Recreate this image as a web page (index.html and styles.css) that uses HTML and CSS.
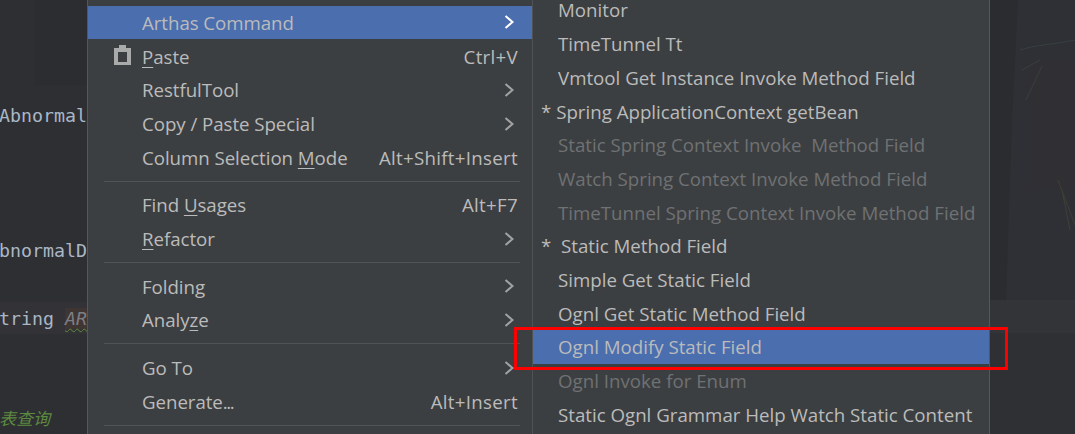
FILE: index.html
```html
<!DOCTYPE html>
<html lang="en">
<head>
  <meta charset="UTF-8">
  <meta name="viewport" content="width=device-width, initial-scale=1.0">
  <title>Arthas Command menu</title>
  <link rel="stylesheet" href="styles.css">
</head>
<body>
  <div class="screen">
    <div class="editor">
      <div class="code code-first"><span>Abnormal</span></div>
      <div class="code code-second"><span>bnormalD</span></div>
      <div class="code code-third"><span>tring <i class="const">AR</i></span></div>
      <div class="code code-comment"><span>表查询</span></div>
    </div>

    <div class="menu">
      <div class="row active"><span class="label">Arthas Command</span><svg class="arrow" viewBox="0 0 10 16"><path d="M1.5 2 L8.5 8 L1.5 14"/></svg></div>
      <div class="row">
        <svg class="icon" viewBox="0 0 17 20"><path fill-rule="evenodd" d="M0 3h5V0h7v3h5v17H0zM4 7v10h9V7z"/></svg>
        <span class="label"><u>P</u>aste</span><span class="keys">Ctrl+V</span>
      </div>
      <div class="row"><span class="label">RestfulTool</span><svg class="arrow" viewBox="0 0 10 16"><path d="M1.5 2 L8.5 8 L1.5 14"/></svg></div>
      <div class="row"><span class="label">Copy / Paste Special</span><svg class="arrow" viewBox="0 0 10 16"><path d="M1.5 2 L8.5 8 L1.5 14"/></svg></div>
      <div class="row"><span class="label">Column Selection <u>M</u>ode</span><span class="keys">Alt+Shift+Insert</span></div>
      <div class="sep"></div>
      <div class="row"><span class="label">Find <u>U</u>sages</span><span class="keys">Alt+F7</span></div>
      <div class="row"><span class="label"><u>R</u>efactor</span><svg class="arrow" viewBox="0 0 10 16"><path d="M1.5 2 L8.5 8 L1.5 14"/></svg></div>
      <div class="sep"></div>
      <div class="row"><span class="label">Folding</span><svg class="arrow" viewBox="0 0 10 16"><path d="M1.5 2 L8.5 8 L1.5 14"/></svg></div>
      <div class="row"><span class="label">Analy<u>z</u>e</span><svg class="arrow" viewBox="0 0 10 16"><path d="M1.5 2 L8.5 8 L1.5 14"/></svg></div>
      <div class="sep"></div>
      <div class="row"><span class="label">Go To</span><svg class="arrow" viewBox="0 0 10 16"><path d="M1.5 2 L8.5 8 L1.5 14"/></svg></div>
      <div class="row"><span class="label">Generate<span class="dots">...</span></span><span class="keys">Alt+Insert</span></div>
      <div class="sep"></div>
    </div>

    <div class="submenu">
      <div class="sub-row">Monitor</div>
      <div class="sub-row">TimeTunnel Tt</div>
      <div class="sub-row">Vmtool Get Instance Invoke Method Field</div>
      <div class="sub-row star">* Spring ApplicationContext getBean</div>
      <div class="sub-row off">Static Spring Context Invoke&nbsp; Method Field</div>
      <div class="sub-row off">Watch Spring Context Invoke Method Field</div>
      <div class="sub-row off">TimeTunnel Spring Context Invoke Method Field</div>
      <div class="sub-row star">*&nbsp; Static Method Field</div>
      <div class="sub-row">Simple Get Static Field</div>
      <div class="sub-row">Ognl Get Static Method Field</div>
      <div class="sub-row active">Ognl Modify Static Field</div>
      <div class="sub-row off">Ognl Invoke for Enum</div>
      <div class="sub-row">Static Ognl Grammar Help Watch Static Content</div>
    </div>

    <div class="backdrop">
      <div class="backdrop-art">
        <svg viewBox="0 0 85 300" preserveAspectRatio="none">
          <path class="dark" d="M0 0H28L22 120L16 300H0z"/>
          <path class="tint-red" d="M38 60H85V190H38z"/>
          <path class="line-teal" d="M32 70L50 60M36 100L52 66M30 50C45 45 60 45 85 40"/>
          <path class="line-olive" d="M68 180L85 225M72 190L80 230"/>
        </svg>
      </div>
      <div class="backdrop-band"></div>
    </div>

    <div class="callout"></div>
  </div>
</body>
</html>
```

FILE: styles.css
```css
html, body {
  margin: 0;
  padding: 0;
  background: #2f3034;
}
.screen {
  display: flex;
  position: relative;
  width: 1075px;
  height: 434px;
  overflow: hidden;
  font-family: "Open Sans", "Noto Sans", sans-serif;
  font-size: 18.7px;
  color: #bbbbbb;
}

/* editor behind the popup */
.editor {
  width: 87px;
  flex: none;
  background: linear-gradient(#2c2d31, #2c2d31) 35px 0 / 52px 85px no-repeat, #2e2f33;
  display: flex;
  flex-direction: column;
  font-family: "DejaVu Sans Mono", monospace;
  font-size: 18.3px;
  color: #a9b7c6;
}
.code {
  height: 33px;
  line-height: 33px;
  display: flex;
  justify-content: flex-end;
  white-space: nowrap;
  overflow: hidden;
}
.code-first { margin-top: 99px; }
.code-second { margin-top: 102px; }
.code-third {
  margin-top: 35px;
  background: #333236;
}
.code-comment {
  margin-top: 67px;
  padding-right: 37px;
  color: #5c8a3e;
  font-family: "Noto Sans CJK SC", sans-serif;
  font-size: 17px;
  font-style: italic;
}
.const {
  color: #7d7e84;
  background: #3f3532;
  text-decoration: underline wavy #5f8c3c 1px;
  text-underline-offset: 3px;
}

/* popup menus */
.menu {
  width: 445px;
  flex: none;
  height: 434px;
  box-sizing: border-box;
  padding-top: 5.6px;
  background: #3c3f41;
  border-left: 1px solid #55585a;
}
.row {
  display: flex;
  align-items: center;
  height: 33.7px;
  padding: 0 14px 0 54px;
  position: relative;
}
.label { flex: 1; white-space: nowrap; letter-spacing: -0.05px; }
.keys { color: #bbbbbb; white-space: nowrap; letter-spacing: 0.3px; }
.dots { letter-spacing: -1.5px; }
.row.active, .sub-row.active { background: #4b6eaf; }
.row u { text-underline-offset: 3px; }
.icon {
  position: absolute;
  left: 26px;
  top: 6px;
  width: 17px;
  height: 20px;
  fill: #a9abab;
}
.arrow {
  width: 10px;
  height: 16px;
  margin-right: 4px;
  fill: none;
  stroke: #a0a2a3;
  stroke-width: 2;
}
.row.active .arrow { stroke: #ffffff; }
.sep {
  height: 1px;
  margin: 6.5px 12px 6.5px 16px;
  background: #515455;
}

.submenu {
  width: 458px;
  flex: none;
  height: 434px;
  box-sizing: border-box;
  background: #3c3f41;
  border-left: 1px solid #4e5254;
  border-right: 1px solid #55585a;
  overflow: hidden;
}
.sub-row {
  height: 33.7px;
  line-height: 33.7px;
  padding-left: 25px;
  white-space: nowrap;
}
/* first item is cut by the top of the screenshot */
.sub-row:first-child { height: 27.3px; line-height: 20px; }
.sub-row.star { padding-left: 8px; }
.sub-row.off { color: #6f7173; }

/* blurred wallpaper on the right */
.backdrop {
  flex: 1;
  display: flex;
  flex-direction: column;
  background: #2f3034;
}
.backdrop-art { height: 300px; background: #2f3035; }
.backdrop-art svg { display: block; width: 100%; height: 100%; }
.backdrop-band { height: 33px; background: #333438; }
.dark { fill: #2b2c2f; }
.tint-red { fill: #302f33; }
.line-teal { fill: none; stroke: #36403f; stroke-width: 1; }
.line-olive { fill: none; stroke: #3e4035; stroke-width: 1; }

.callout {
  position: absolute;
  left: 514px;
  top: 327px;
  width: 488px;
  height: 37px;
  border: 3px solid #ff0000;
}
```
